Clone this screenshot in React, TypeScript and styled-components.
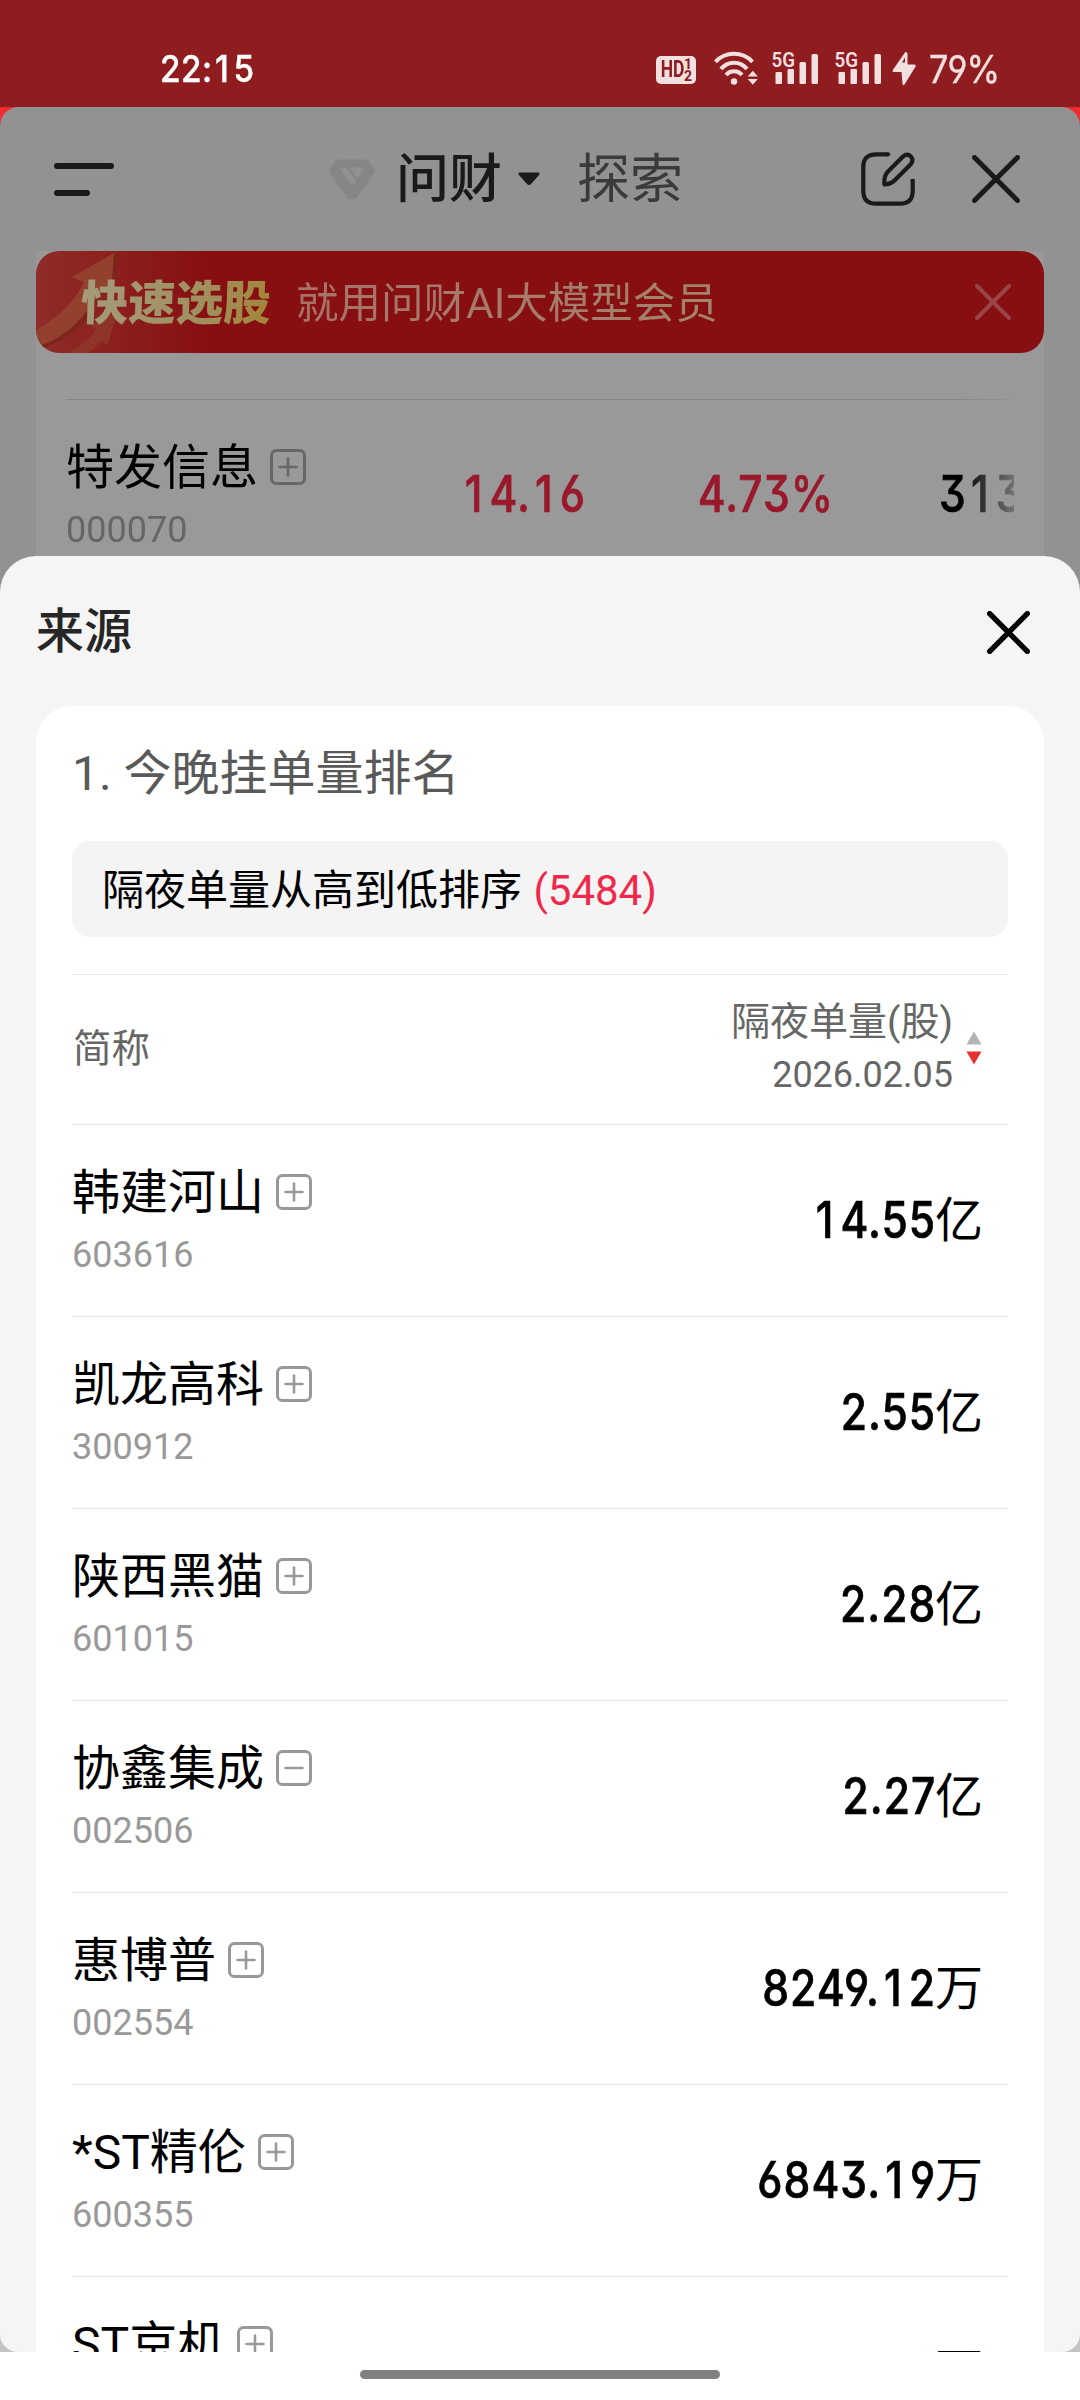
import React from "react";
import styled, { createGlobalStyle } from "styled-components";

const Global = createGlobalStyle`
  * { box-sizing: border-box; }
  html, body { margin: 0; padding: 0; background: #fff; }
  body { font-family: Roboto, "Noto Sans CJK SC", sans-serif; }
  svg { display: block; flex: none; }
`;

const Screen = styled.div`
  width: 1080px;
  height: 2400px;
  overflow: hidden;
  display: flex;
  flex-direction: column;
  background: #fff;
`;

/* ---------- status bar ---------- */

const StatusBar = styled.div`
  height: 107px;
  flex: none;
  background: #8f1d20;
  display: flex;
  justify-content: space-between;
  align-items: flex-start;
  padding: 46px 80px 0 160px;
`;

const Clock = styled.div`
  font: 500 37px/46px Inter, sans-serif;
  font-feature-settings: "cv09";
  color: #fff;
  letter-spacing: 0.6px;
  -webkit-text-stroke: 0.4px currentColor;
  transform: scaleX(0.9);
  transform-origin: left;
`;

const StatusIcons = styled.div`
  display: flex;
  align-items: flex-start;
  height: 46px;
  color: #f2dfe0;
`;

const HdBadge = styled.div`
  width: 40px;
  height: 28px;
  margin-top: 10px;
  border-radius: 5px;
  background: #f2dfe0;
  color: #8f1d20;
  display: flex;
  justify-content: center;
  align-items: center;
`;

const HdText = styled.span`
  font: 700 23px/28px Roboto, sans-serif;
  transform: scaleX(0.76);
  margin: 0 -4px 0 -3px;
`;

const HdDigits = styled.span`
  font: 700 14px/12px Roboto, sans-serif;
  display: flex;
  flex-direction: column;
`;

const StatusGlyph = styled.svg<{ $left: number }>`
  margin-left: ${(p) => p.$left}px;
  margin-top: 4px;
  overflow: visible;
`;

const Battery = styled.div`
  font: 400 38px/46px Inter, sans-serif;
  font-feature-settings: "cv04", "cv09";
  -webkit-text-stroke: 0.4px currentColor;
  width: 70px;
  margin-left: 13px;
  margin-right: 1px;
  white-space: nowrap;
  letter-spacing: -1px;
  transform: scaleX(0.9);
  transform-origin: left;
`;

/* ---------- dimmed page ---------- */

const Backdrop = styled.div`
  height: 449px;
  flex: none;
  background: #ed2d31;
`;

const Page = styled.div`
  height: 485px;
  background: #929292;
  border-radius: 19px 19px 0 0;
`;

const NavBar = styled.header`
  height: 144px;
  display: flex;
  align-items: center;
  padding: 0 60px 0 54px;
`;

const MenuButton = styled.div`
  width: 60px;
  height: 33px;
  display: flex;
  flex-direction: column;
  justify-content: space-between;
`;

const MenuLine = styled.span<{ $w: number }>`
  width: ${(p) => p.$w}px;
  height: 6px;
  border-radius: 3px;
  background: #1a1a1a;
`;

const NavTabs = styled.nav`
  display: flex;
  align-items: center;
  margin-left: 215px;
  flex: 1;
`;

const NavTab = styled.span<{ $active?: boolean; $left: number }>`
  padding-top: 2px;
  font-size: 53px;
  line-height: 72px;
  font-weight: ${(p) => (p.$active ? 500 : 400)};
  color: ${(p) => (p.$active ? "#1a1a1a" : "#3a3a3a")};
  margin-left: ${(p) => p.$left}px;
`;

const Caret = styled.svg`
  margin-left: 16px;
`;

const NavActions = styled.div`
  display: flex;
  align-items: center;
  gap: 57px;
`;

const ResultCard = styled.section`
  margin: 0 36px;
  height: 341px;
  background: #999;
`;

const Banner = styled.div`
  position: relative;
  height: 102px;
  border-radius: 23px;
  overflow: hidden;
  background: linear-gradient(90deg, #8e2c28 0, #8c1f1e 80px, #870f11 170px);
  display: flex;
  align-items: center;
  padding: 0 33px 0 45px;
`;

const BannerArt = styled.svg`
  position: absolute;
  left: 0;
  top: 0;
`;

const BannerLead = styled.span`
  position: relative;
  width: 215px;
  padding-top: 4px;
  font-size: 47.5px;
  line-height: 60px;
  font-weight: 900;
  background: linear-gradient(100deg, #a39a78 10%, #a08f5c 60%, #a38536 88%);
  -webkit-background-clip: text;
  background-clip: text;
  color: transparent;
  transform: skewX(-2deg);
`;

const BannerText = styled.span`
  padding-top: 3px;
  font-size: 42.5px;
  line-height: 60px;
  font-weight: 400;
  flex: 1;
  background: linear-gradient(90deg, #a87268, #a3846c 420px);
  -webkit-background-clip: text;
  background-clip: text;
  color: transparent;
`;

const FadingRow = styled.div`
  margin: 46px 30px 0;
  height: 193px;
  border-top: 1px solid #868686;
  display: grid;
  grid-template-columns: 331px 188px 248px 1fr;
  overflow: hidden;
  mask-image: linear-gradient(90deg, #000 calc(100% - 54px), rgba(0, 0, 0, 0.25) 100%);
`;

/* ---------- sheet ---------- */

const SheetWrap = styled.div`
  height: 1796px;
  flex: none;
  background: linear-gradient(#929292 50%, #c4c4c4 50%);
`;

const Sheet = styled.section`
  height: 1796px;
  background: #f5f5f5;
  border-radius: 36px 36px 18px 18px;
  overflow: hidden;
`;

const SheetHeader = styled.header`
  height: 150px;
  display: flex;
  align-items: center;
  justify-content: space-between;
  padding: 2px 50px 0 36px;
`;

const SheetTitle = styled.h1`
  margin: 0;
  font-size: 48px;
  line-height: 60px;
  font-weight: 500;
  color: #262626;
`;

const SourceCard = styled.div`
  margin: 0 36px;
  height: 1700px;
  padding: 40px 36px 0;
  background: #fff;
  border-radius: 36px 36px 0 0;
`;

const Question = styled.h2`
  margin: 0;
  font-size: 48px;
  line-height: 56px;
  font-weight: 400;
  color: #595959;
`;

const Condition = styled.div`
  margin-top: 39px;
  height: 96px;
  padding: 2px 30px 0;
  border-radius: 18px;
  background: #f4f4f4;
  font-size: 42px;
  line-height: 96px;
  color: #000;
`;

const Count = styled.span`
  margin-left: 1px;
  color: #f02849;
`;

const TableHead = styled.div`
  margin-top: 37px;
  height: 151px;
  border-top: 1px solid #e5e5e5;
  border-bottom: 1px solid #e3e3e3;
  display: flex;
  align-items: center;
  padding: 0 26px 3px 0;
  color: #666;
`;

const HeadCell = styled.div`
  flex: 1;
  padding: 1px 0 0 1px;
  font-size: 38.5px;
  line-height: 52px;
`;

const HeadValue = styled.div`
  display: flex;
  flex-direction: column;
  align-items: flex-end;
  font-size: 39px;
  line-height: 52px;
`;

const HeadDate = styled.span`
  padding-top: 1px;
  font-size: 36px;
`;

const SortMark = styled.svg`
  margin-left: 13px;
`;

const Row = styled.div`
  height: 192px;
  border-bottom: 1px solid #e3e3e3;
  display: flex;
  align-items: center;
  justify-content: space-between;
  padding-right: 25px;
`;

const StockCell = styled.div`
  align-self: flex-start;
  padding-top: 39px;
`;

const StockName = styled.div`
  display: flex;
  align-items: center;
  gap: 12px;
  height: 56px;
  padding-top: 2px;
  font-size: 48px;
  line-height: 54px;
  color: #000;
  white-space: nowrap;
`;

const StockCode = styled.div<{ $dim?: boolean }>`
  margin-top: 14px;
  font-size: 36px;
  line-height: 42px;
  color: ${(p) => (p.$dim ? "#666" : "#999")};
`;

const ToggleIcon = styled.svg<{ $dim?: boolean }>`
  margin-top: -2px;
  color: ${(p) => (p.$dim ? "#666" : "#999")};
`;

const Value = styled.div`
  display: flex;
  align-items: baseline;
  line-height: 56px;
  color: #000;
`;

const Unit = styled.span`
  font-size: 48px;
  transform: translateY(-1px);
`;

const Digits = styled.span<{ $color?: string; $from?: string }>`
  font-family: Inter, Roboto, sans-serif;
  font-size: 51px;
  line-height: 56px;
  font-weight: 500;
  font-feature-settings: "cv09", "cv03", "cv04";
  -webkit-text-stroke: 0.7px currentColor;
  letter-spacing: 1.2px;
  margin-right: -1px;
  color: ${(p) => p.$color ?? "#000"};
  transform: scaleX(0.835);
  transform-origin: ${(p) => p.$from ?? "right"};
  white-space: nowrap;
`;

/* Gives the narrow "1" the same advance as the other figures. */
const One = styled.span`
  padding: 0 0.14em 0 0.1em;
`;

const ClockOne = styled.span`
  padding: 0 0.12em 0 0.07em;
`;

const Quote = styled.div<{ $start?: boolean }>`
  padding: 66px 0 0 ${(p) => (p.$start ? 106 : 0)}px;
  text-align: ${(p) => (p.$start ? "left" : "right")};
`;

const NavArea = styled.footer`
  height: 48px;
  flex: none;
  display: flex;
  justify-content: center;
  padding-top: 18px;
  background: #fff;
`;

const HomeBar = styled.span`
  width: 360px;
  height: 9px;
  border-radius: 5px;
  background: #808080;
`;

/* ---------- drawings ---------- */

const Cross = ({ w, h, sw, color }: { w: number; h: number; sw: number; color: string }) => (
  <svg width={w} height={h} viewBox={`0 0 ${w} ${h}`} stroke={color} strokeWidth={sw} strokeLinecap="round">
    <path d={`M${sw / 2} ${sw / 2}L${w - sw / 2} ${h - sw / 2}M${w - sw / 2} ${sw / 2}L${sw / 2} ${h - sw / 2}`} />
  </svg>
);

const Toggle = ({ minus, dim }: { minus?: boolean; dim?: boolean }) => (
  <ToggleIcon $dim={dim} width="36" height="36" viewBox="0 0 36 36" fill="none" stroke="currentColor">
    <rect x="1.5" y="1.5" width="33" height="33" rx="5" strokeWidth="3" />
    <path d={minus ? "M9.5 18h17" : "M9.5 18h17M18 9.5v17"} strokeWidth="2.6" strokeLinecap="round" />
  </ToggleIcon>
);

const Signal = ({ left }: { left: number }) => (
  <StatusGlyph $left={left} width="46" height="35" viewBox="0 0 46 35" fill="currentColor">
    <text x="-0.5" y="17" fontFamily="Roboto" fontWeight="600" fontSize="20" textLength="23.5" lengthAdjust="spacingAndGlyphs">5G</text>
    <rect x="3.5" y="22" width="6.500" height="12" rx="1" />
    <rect x="15.500" y="19" width="6.500" height="15" rx="1" />
    <rect x="27.500" y="12" width="6.500" height="22" rx="1.5" />
    <rect x="39.500" y="4" width="6.500" height="30" rx="1.5" />
  </StatusGlyph>
);

const Figures = ({ text }: { text: string }) => (
  <>{text.split(/(1)/).map((part, i) => (part === "1" ? <One key={i}>1</One> : part))}</>
);

interface Stock {
  name: string;
  code: string;
  amount: string;
  unit: string;
  held?: boolean;
}

const stocks: Stock[] = [
  { name: "韩建河山", code: "603616", amount: "14.55", unit: "亿" },
  { name: "凯龙高科", code: "300912", amount: "2.55", unit: "亿" },
  { name: "陕西黑猫", code: "601015", amount: "2.28", unit: "亿" },
  { name: "协鑫集成", code: "002506", amount: "2.27", unit: "亿", held: true },
  { name: "惠博普", code: "002554", amount: "8249.12", unit: "万" },
  { name: "*ST精伦", code: "600355", amount: "6843.19", unit: "万" },
  { name: "ST京机", code: "", amount: "", unit: "万" },
];

export default function App() {
  return (
    <Screen>
      <Global />
      <StatusBar>
        <Clock>
          22:<ClockOne>1</ClockOne>5
        </Clock>
        <StatusIcons>
          <HdBadge>
            <HdText>HD</HdText>
            <HdDigits>
              <span>1</span>
              <span>2</span>
            </HdDigits>
          </HdBadge>
          <StatusGlyph $left={17} width="46" height="36" viewBox="0 0 46 36" fill="none" stroke="currentColor" strokeWidth="4">
            <path d="M2.500 11.800a25.400 25.400 0 0 1 37 0" />
            <path d="M8 19a16.500 16.500 0 0 1 26 0" />
            <path d="M13 25a10.500 10.500 0 0 1 16 0" />
            <circle cx="21" cy="31.500" r="3.200" fill="currentColor" stroke="none" />
            <path d="M34.800 26.500l5-5.800 5 5.800zM34.800 29l5 5.800 5-5.800z" fill="currentColor" stroke="none" />
          </StatusGlyph>
          <Signal left={13} />
          <Signal left={17} />
          <StatusGlyph $left={11} width="24" height="36" viewBox="0 0 24 36" fill="currentColor">
            <path d="M13 2.500L0.800 20Q-0.200 22 1.500 22H9.500L10.500 34Q11 36 12.500 34.500L23.600 16.500Q24.200 14.500 22 14.500H15.500V3.500Q14.800 1 13 2.500Z" />
            <path d="M13 7.500V12.500H10Z" fill="#8f1d20" />
          </StatusGlyph>
          <Battery>79%</Battery>
        </StatusIcons>
      </StatusBar>

      <Backdrop>
        <Page>
          <NavBar>
            <MenuButton>
              <MenuLine $w={60} />
              <MenuLine $w={36} />
            </MenuButton>
            <NavTabs>
              <svg width="46" height="40" viewBox="0 0 46 40">
                <path d="M9 0.500H37Q39 0.500 40 2L45.500 10.500Q46.500 12 45.500 13.500L28 38Q26.500 40 24.500 40H21.500Q19.500 40 18 38L0.500 13.500Q-0.500 12 0.500 10.500L6 2Q7 0.500 9 0.500Z" fill="#868686" />
                <path d="M10 8.500H17L27 22L23 27.500Z M21 8.500H33Q35 8.500 34 11L28.500 19.500Z" fill="#929292" />
              </svg>
              <NavTab $active $left={21}>问财</NavTab>
              <Caret width="22" height="14" viewBox="0 0 22 14">
                <path d="M2 0.500H20Q22.500 0.500 21 3L13 12Q11 14 9 12L1 3Q-0.500 0.500 2 0.500Z" fill="#1a1a1a" />
              </Caret>
              <NavTab $left={37}>探索</NavTab>
            </NavTabs>
            <NavActions>
              <svg width="54" height="54" viewBox="0 0 54 54" fill="none" stroke="#1a1a1a" strokeWidth="4.200">
                <path d="M27 2.300H15Q2.300 2.300 2.300 15V39Q2.300 51.700 15 51.700H39Q51.700 51.700 51.700 39V27" />
                <circle cx="27" cy="2.300" r="2.100" fill="#1a1a1a" stroke="none" />
                <path d="M23.500 32.500Q22.500 24 27 19.500L42 4.500Q46 1 50 4.500Q53 8.500 49.500 12.500L34.500 27.500Q30.500 32 23.500 32.500Z" strokeLinejoin="round" />
              </svg>
              <Cross w={48} h={48} sw={5} color="#1a1a1a" />
            </NavActions>
          </NavBar>

          <ResultCard>
            <Banner>
              <BannerArt width="110" height="102" viewBox="0 0 110 102">
                <path d="M0 79Q34 60 48 31L36 26L78 2L80 4L75 42L66 36Q44 82 6 96Q0 88 0 79Z" fill="#93402f" />
                <path d="M78 2L82 5L77 44L75 42Z M6 94Q44 80 66 36L67 40Q46 84 8 97Z" fill="#7d251a" />
                <path d="M32 102Q52 92 60 78L54 75L82 60L71 95L66 89Q60 97 52 102Z" fill="#8f3527" />
              </BannerArt>
              <BannerLead>快速选股</BannerLead>
              <BannerText>就用问财AI大模型会员</BannerText>
              <Cross w={36} h={36} sw={4} color="#994548" />
            </Banner>
            <FadingRow>
              <StockCell>
                <StockName>
                  特发信息
                  <Toggle dim />
                </StockName>
                <StockCode $dim>000070</StockCode>
              </StockCell>
              <Quote>
                <Digits as="div" $color="#99182b">
                  <Figures text="14.16" />
                </Digits>
              </Quote>
              <Quote>
                <Digits as="div" $color="#99182b">4.73%</Digits>
              </Quote>
              <Quote $start>
                <Digits as="div" $from="left">
                  <Figures text="313" />
                </Digits>
              </Quote>
            </FadingRow>
          </ResultCard>
        </Page>
      </Backdrop>

      <SheetWrap>
        <Sheet>
          <SheetHeader>
            <SheetTitle>来源</SheetTitle>
            <Cross w={43} h={43} sw={5.4} color="#000" />
          </SheetHeader>
          <SourceCard>
            <Question>1. 今晚挂单量排名</Question>
            <Condition>
              隔夜单量从高到低排序 <Count>(5484)</Count>
            </Condition>
            <TableHead>
              <HeadCell>简称</HeadCell>
              <HeadValue>
                <span>隔夜单量(股)</span>
                <HeadDate>2026.02.05</HeadDate>
              </HeadValue>
              <SortMark width="16" height="34" viewBox="0 0 16 34">
                <path d="M8 0.500L15.500 13.500H0.500Z" fill="#b3b3b3" />
                <path d="M8 33.500L15.500 20.500H0.500Z" fill="#e83030" />
              </SortMark>
            </TableHead>
            {stocks.map((s) => (
              <Row key={s.name}>
                <StockCell>
                  <StockName>
                    {s.name}
                    <Toggle minus={s.held} />
                  </StockName>
                  <StockCode>{s.code}</StockCode>
                </StockCell>
                <Value>
                  <Digits>
                    <Figures text={s.amount} />
                  </Digits>
                  <Unit>{s.unit}</Unit>
                </Value>
              </Row>
            ))}
          </SourceCard>
        </Sheet>
      </SheetWrap>

      <NavArea>
        <HomeBar />
      </NavArea>
    </Screen>
  );
}
